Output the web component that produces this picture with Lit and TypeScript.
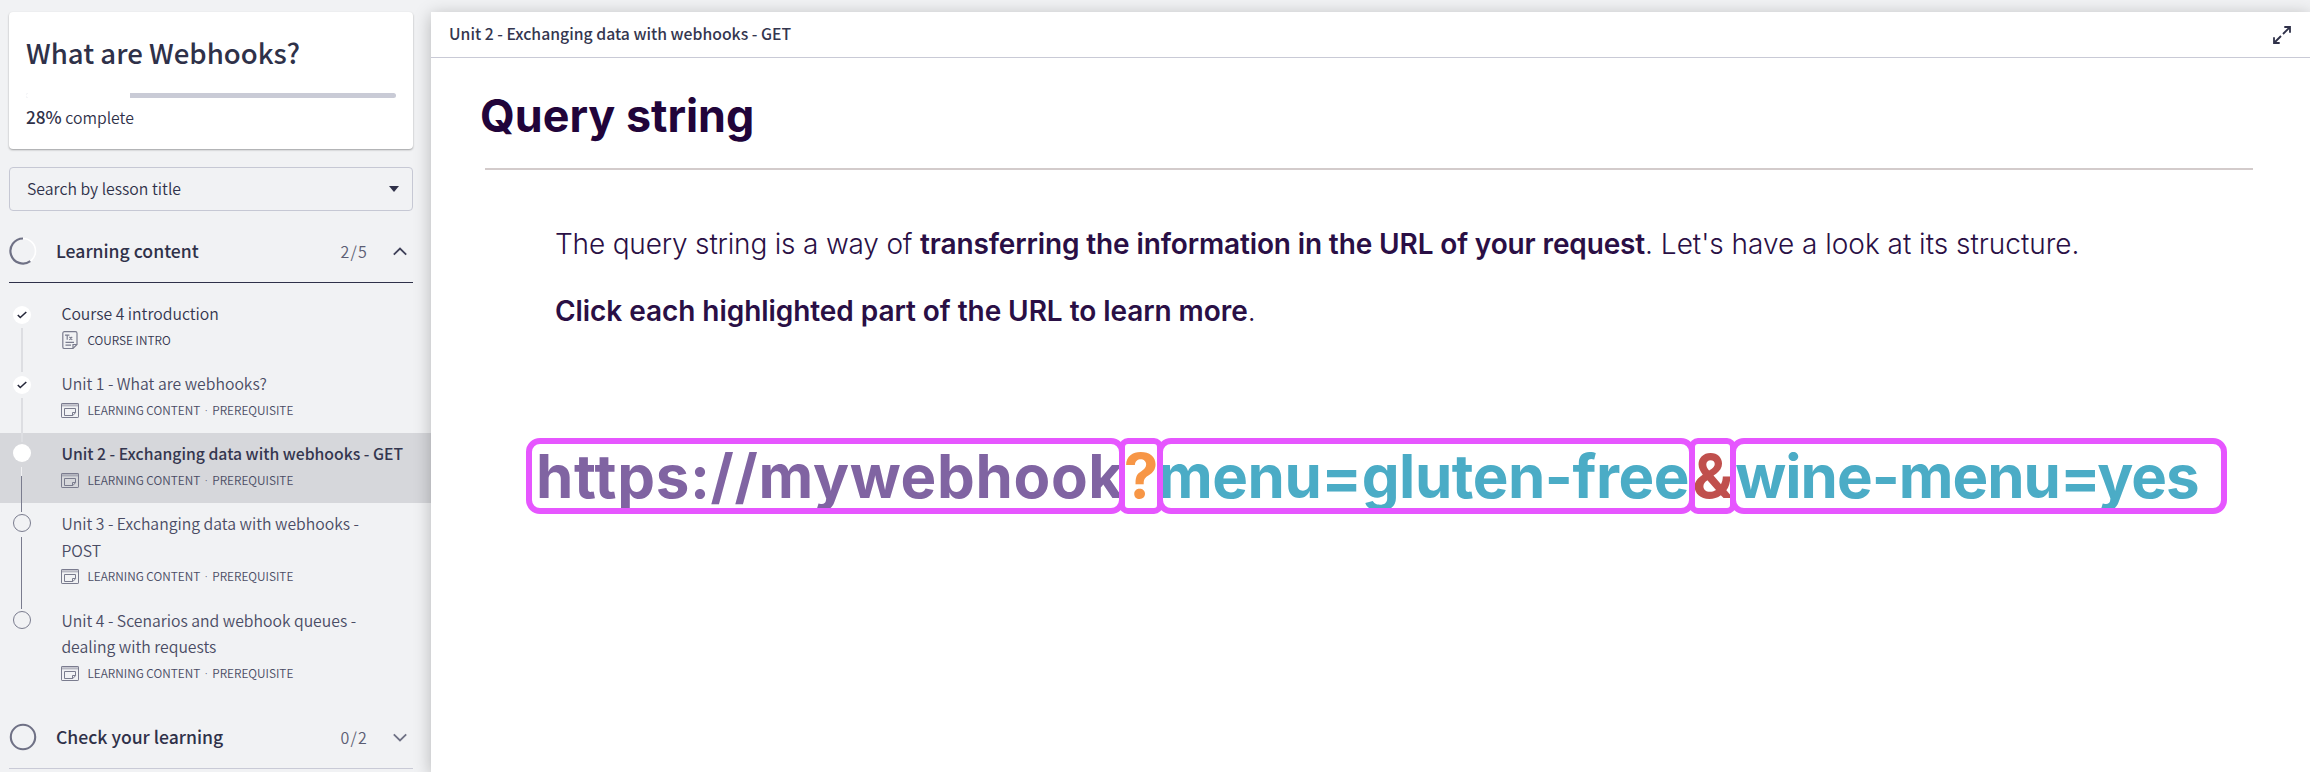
import { LitElement, html, css, nothing } from "lit";
import { classMap } from "lit/directives/class-map.js";

type Lesson = {
  title: string;
  kind: string;
  prerequisite: boolean;
  status: "done" | "current" | "open";
  icon: "doc" | "screen";
};

const LESSONS: Lesson[] = [
  { title: "Course 4 introduction", kind: "COURSE INTRO", prerequisite: false, status: "done", icon: "doc" },
  { title: "Unit 1 - What are webhooks?", kind: "LEARNING CONTENT", prerequisite: true, status: "done", icon: "screen" },
  { title: "Unit 2 - Exchanging data with webhooks - GET", kind: "LEARNING CONTENT", prerequisite: true, status: "current", icon: "screen" },
  { title: "Unit 3 - Exchanging data with webhooks - POST", kind: "LEARNING CONTENT", prerequisite: true, status: "open", icon: "screen" },
  { title: "Unit 4 - Scenarios and webhook queues - dealing with requests", kind: "LEARNING CONTENT", prerequisite: true, status: "open", icon: "screen" },
];

const docIcon = html`<svg class="kind" width="18" height="20" viewBox="0 0 18 20" fill="none" stroke="#7a7c8e" stroke-width="1.2">
  <path d="M3.4 1.6h11a1.6 1.6 0 0 1 1.6 1.6v11.3l-4 4H3.4a1.6 1.6 0 0 1-1.6-1.6V3.2a1.6 1.6 0 0 1 1.6-1.6z"/>
  <path d="M12 18.3v-3.8h3.8M4.5 12.4h8.5M4.5 15.2h5.5"/>
  <path d="M4 5.2h4.4M6.2 5.2v4.6M8.4 6.8l2.8 3M11.2 6.8l-2.8 3"/>
</svg>`;

const screenIcon = html`<svg class="kind" width="18" height="20" viewBox="0 0 18 20" fill="none" stroke="#7a7c8e" stroke-width="1">
  <rect x="0.5" y="3.5" width="17" height="14" rx="0.6"/>
  <path d="M0.5 4h17M0.5 5.8h17" opacity="0.7"/>
  <path d="M3.5 8.5h11v4.2l-2.6 2.8H3.5zM11.5 15.3v-2.8h3"/>
</svg>`;

class CourseSidebar extends LitElement {
  static styles = css`
    :host { display: block; color: #2f3149; font-weight: 350; }
    .card {
      box-sizing: border-box; margin: 12px 18px 0 9px; height: 137px; padding: 15px 17px 0 17px;
      background: #fff; border-radius: 4px; box-shadow: 0 1px 2px rgba(0, 0, 0, 0.35);
    }
    h1 { margin: 0; font-size: 27.6px; font-weight: 500; line-height: 50px; white-space: nowrap; }
    .track { margin-top: 16px; height: 5px; border-radius: 3px; background: #c9cbd6; overflow: hidden; }
    .done { height: 5px; background: #fff; }
    .pct { margin-top: 6px; font-size: 15.8px; line-height: 26px; }
    .pct b { font-weight: 500; font-size: 17.2px; }
    .search {
      box-sizing: border-box; margin: 18px 18px 0 9px; height: 44px; padding: 0 13px 0 17px;
      display: flex; align-items: center; justify-content: space-between;
      border: 1px solid #c6c8d4; border-radius: 4px; font-size: 15.8px; line-height: 26px;
    }
    .group {
      box-sizing: border-box; margin: 9px 18px 0 9px; height: 63px; padding-right: 6px;
      display: grid; grid-template-columns: 47px 1fr auto 39px; align-items: center;
      border-bottom: 1px solid #2f3149;
    }
    .group.closed { margin-top: 10px; border-color: #c9cad6; }
    .group h2 { margin: 0; font-size: 17.6px; font-weight: 500; line-height: 26px; }
    .count { font-size: 16px; line-height: 26px; letter-spacing: 1.2px; color: #5b5d73; }
    .chev { justify-self: end; }
    .list { padding-top: 10px; }
    .row {
      box-sizing: border-box; min-height: 70px; padding-left: 12px;
      display: grid; grid-template-columns: 49.4px 1fr; color: #4a4c64;
    }
    .row.first { color: #34364f; }
    .row.current { background: #d6d7db; }
    .rail { display: flex; flex-direction: column; align-items: center; width: 19px; }
    .lead { width: 2px; height: 9px; background: #dddee2; flex: none; }
    .first .lead { background: transparent; }
    .open .lead { width: 1.5px; background: #7a7c8e; }
    .dot {
      box-sizing: border-box; width: 18px; height: 18px; margin: 2px 0 5px; border-radius: 50%;
      flex: none; background: #fff; display: grid; place-items: center;
    }
    .done-row .dot { margin: 4px 0 4px; }
    .open .dot { background: transparent; border: 1.3px solid #7a7c8e; }
    .tail { width: 2px; flex: 1; background: #dddee2; }
    .current .tail { width: 1.5px; background: linear-gradient(#f0f0f2 9px, #7a7c8e 9px); }
    .open .tail { width: 1.5px; background: #7a7c8e; }
    .last .tail { background: transparent; }
    .text { padding: 8px 45px 13px 0; }
    .title { font-size: 15.75px; line-height: 26.5px; }
    .current .title { font-weight: 500; font-size: 15.75px; color: #34364f; white-space: nowrap; }
    .meta { margin-top: 2px; display: flex; align-items: center; gap: 8px; font-size: 11.85px; line-height: 20.5px; height: 20.5px; white-space: nowrap; }
    .kind { flex: none; }
    .mid { font-family: "Open Sans", sans-serif; padding: 0 4.6px; }
  `;

  private mark(l: Lesson) {
    return l.status === "done"
      ? html`<svg width="10" height="8" viewBox="0 0 10 8" fill="none" stroke="#25273a" stroke-width="1.6"><path d="M0.8 4l2.5 2.5L9.3 1"/></svg>`
      : nothing;
  }

  private row(l: Lesson, i: number) {
    const cls = {
      row: true,
      first: i === 0,
      last: i === LESSONS.length - 1,
      "done-row": l.status === "done",
      current: l.status === "current",
      open: l.status === "open",
    };
    return html`<div class=${classMap(cls)}>
      <div class="rail"><i class="lead"></i><span class="dot">${this.mark(l)}</span><i class="tail"></i></div>
      <div class="text">
        <div class="title">${l.title}</div>
        <div class="meta">
          ${l.icon === "doc" ? docIcon : screenIcon}
          <span>${l.kind}${l.prerequisite ? html`<span class="mid">·</span>PREREQUISITE` : nothing}</span>
        </div>
      </div>
    </div>`;
  }

  render() {
    return html`
      <section class="card">
        <h1>What are Webhooks?</h1>
        <div class="track"><div class="done" style="width:28%"></div></div>
        <div class="pct"><b>28%</b> complete</div>
      </section>
      <div class="search">
        <span>Search by lesson title</span>
        <svg width="10" height="6" viewBox="0 0 10 6"><path d="M0 0h10L5 6z" fill="#2f3149"/></svg>
      </div>
      <div class="group">
        <svg width="28" height="28" viewBox="0 0 28 28" fill="none">
          <circle cx="14" cy="14" r="12.5" stroke="#fff" stroke-width="1.6"/>
          <path d="M14 1.5A12.5 12.5 0 1 0 21.3 24.1" stroke="#6f7185" stroke-width="2.2"/>
        </svg>
        <h2>Learning content</h2>
        <span class="count">2/5</span>
        <svg class="chev" width="14" height="9" viewBox="0 0 14 9" fill="none" stroke="#3f4159" stroke-width="1.8"><path d="M0.8 7.7L7 1.5l6.2 6.2"/></svg>
      </div>
      <div class="list">${LESSONS.map((l, i) => this.row(l, i))}</div>
      <div class="group closed">
        <svg width="28" height="28" viewBox="0 0 28 28" fill="none">
          <circle cx="14" cy="14" r="12.2" stroke="#6f7185" stroke-width="2.1"/>
        </svg>
        <h2>Check your learning</h2>
        <span class="count">0/2</span>
        <svg class="chev" width="14" height="9" viewBox="0 0 14 9" fill="none" stroke="#6f7185" stroke-width="1.8"><path d="M0.8 1.3L7 7.5l6.2-6.2"/></svg>
      </div>
    `;
  }
}
customElements.define("course-sidebar", CourseSidebar);

class LessonView extends LitElement {
  static styles = css`
    :host { display: block; background: #fff; box-shadow: 0 3px 16px rgba(0, 0, 0, 0.25); }
    header {
      box-sizing: border-box; height: 46px; padding: 0 19px 0 18px; border-bottom: 1px solid #c9cad6;
      display: flex; align-items: center; justify-content: space-between;
      font-size: 15.77px; font-weight: 500; line-height: 26px; color: #34364f;
    }
    header span { margin-top: -1px; }
    .slide { font-family: Inter, sans-serif; color: #2a0f45; }
    h2 { margin: 30px 0 0 49px; font-size: 44.8px; font-weight: 700; line-height: 56px; color: #21043a; white-space: nowrap; }
    .rule { margin: 24px 57px 0 54px; height: 2px; background: #d3cbcb; }
    p { margin: 0 0 0 124px; font-size: 28px; font-weight: 300; line-height: 40px; white-space: nowrap; letter-spacing: -0.02px; }
    .intro { letter-spacing: -0.18px; }
    p b { font-weight: 600; letter-spacing: -0.13px; }
    .p1 { margin-top: 54px; }
    .p2 { margin-top: 27px; }
    .p2 b { letter-spacing: -0.06px; }
    .url { display: flex; margin: 107px 0 0 95px; }
    .seg {
      box-sizing: border-box; height: 76px; flex: none; overflow: hidden; white-space: nowrap;
      border: 6px solid #e656ff; border-radius: 14px; margin-right: -6px;
      font-size: 60px; font-weight: 700; line-height: 64px;
    }
    .host { width: 599px; padding-left: 4px; color: #8064a2; letter-spacing: 0.66px; }
    .q { width: 44px; color: #f79646; border-radius: 9px; display: flex; justify-content: center; font-size: 62px; }
    .a { width: 538.3px; color: #4bacc6; letter-spacing: -0.46px; text-indent: -5px; }
    .amp { width: 47px; color: #c0504d; border-radius: 9px; display: flex; justify-content: center; font-size: 61px; }
    .b { width: 497px; color: #4bacc6; letter-spacing: -1px; text-indent: -1px; }
  `;

  render() {
    return html`
      <header>
        <span>Unit 2 - Exchanging data with webhooks - GET</span>
        <svg width="18" height="18" viewBox="0 0 18 18" fill="none" stroke="#2f3149" stroke-width="1.8">
          <path d="M11.3 1H17v5.7M17 1L10 8M6.7 17H1v-5.7M1 17l7-7"/>
        </svg>
      </header>
      <div class="slide">
        <h2>Query string</h2>
        <div class="rule"></div>
        <p class="p1"><span class="intro">The query string is a way of </span><b>transferring the information in the URL of your request</b>. Let's have a look at its structure.</p>
        <p class="p2"><b>Click each highlighted part of the URL to learn more</b>.</p>
        <div class="url">
          <div class="seg host">https://mywebhook</div>
          <div class="seg q">?</div>
          <div class="seg a">menu=gluten-free</div>
          <div class="seg amp">&amp;</div>
          <div class="seg b">wine-menu=yes</div>
        </div>
      </div>
    `;
  }
}
customElements.define("lesson-view", LessonView);

class AppRoot extends LitElement {
  static styles = css`
    :host {
      display: grid; grid-template-columns: 431px 1fr; height: 772px; overflow: hidden;
      background: #f1f2f4; font-family: "Noto Sans CJK SC", "Open Sans", sans-serif;
    }
    lesson-view { margin-top: 12px; }
  `;
  render() {
    return html`<course-sidebar></course-sidebar><lesson-view></lesson-view>`;
  }
}
customElements.define("app-root", AppRoot);
